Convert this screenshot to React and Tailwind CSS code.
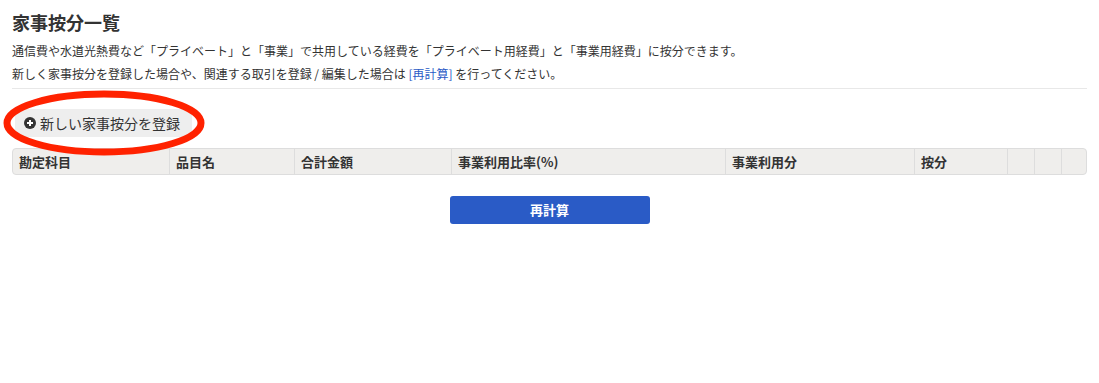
const columns = [
  { label: "勘定科目", w: "w-[156px]" },
  { label: "品目名", w: "w-[125px]" },
  { label: "合計金額", w: "w-[157px]" },
  { label: "事業利用比率(%)", w: "w-[274px]" },
  { label: "事業利用分", w: "w-[189px]" },
  { label: "按分", w: "w-[93px]" },
  { label: "", w: "w-[27px]" },
  { label: "", w: "w-[27px]" },
  { label: "", w: "flex-1" },
];

const App = () => {
  return (
    <div
      className="w-[1099px] h-[383px] bg-white text-[#333] px-[12px] pt-[10px]"
      style={{ fontFamily: '"Noto Sans CJK JP", "Noto Sans", sans-serif' }}
    >
      {/* Title */}
      <h1 className="text-[18px] font-bold leading-[24px]">家事按分一覧</h1>

      {/* Description */}
      <p className="text-[12px] leading-[16px] mt-[9px]">
        通信費や水道光熱費など「プライベート」と「事業」で共用している経費を「プライベート用経費」と「事業用経費」に按分できます。
      </p>
      <p className="text-[12px] leading-[16px] mt-[7px]">
        新しく家事按分を登録した場合や、関連する取引を登録 / 編集した場合は{" "}
        <a className="text-[#2a5bc6]">[再計算]</a> を行ってください。
      </p>

      <div className="border-b border-[#e8e8e8] mt-[6px]"></div>

      {/* New button with annotation */}
      <div className="relative mt-[20px] h-[28px]">
        <button className="ml-[3px] h-[28px] pl-[9px] pr-[12px] rounded-[6px] bg-[#eeeeee] flex items-center gap-[4px] text-[14px] text-[#333]">
          <span className="w-[12px] h-[12px] rounded-full bg-[#333] flex items-center justify-center">
            <svg width="8" height="8" viewBox="0 0 8 8">
              <path d="M4 1v6M1 4h6" stroke="white" strokeWidth="2" />
            </svg>
          </span>
          新しい家事按分を登録
        </button>
        <svg
          className="absolute left-[-10px] top-[-19px] pointer-events-none"
          width="204"
          height="66"
          viewBox="0 0 204 66"
        >
          <ellipse cx="102" cy="33" rx="97" ry="29" fill="none" stroke="#ff2200" strokeWidth="7" />
        </svg>
      </div>

      {/* Table header */}
      <div className="mt-[11px] flex h-[27px] bg-[#efeeec] border border-[#dddddd] rounded-[4px]">
        {columns.map((c, i) => (
          <div
            key={i}
            className={`${c.w} ${i > 0 ? "border-l border-[#dddddd]" : ""} flex items-center px-[6px] text-[13px] font-bold`}
          >
            {c.label}
          </div>
        ))}
      </div>

      {/* Recalc button */}
      <div className="flex justify-center mt-[21px]">
        <button className="w-[200px] h-[28px] bg-[#2a5bc6] rounded-[3px] text-white text-[13px] font-bold">
          再計算
        </button>
      </div>
    </div>
  );
};

export default App;
